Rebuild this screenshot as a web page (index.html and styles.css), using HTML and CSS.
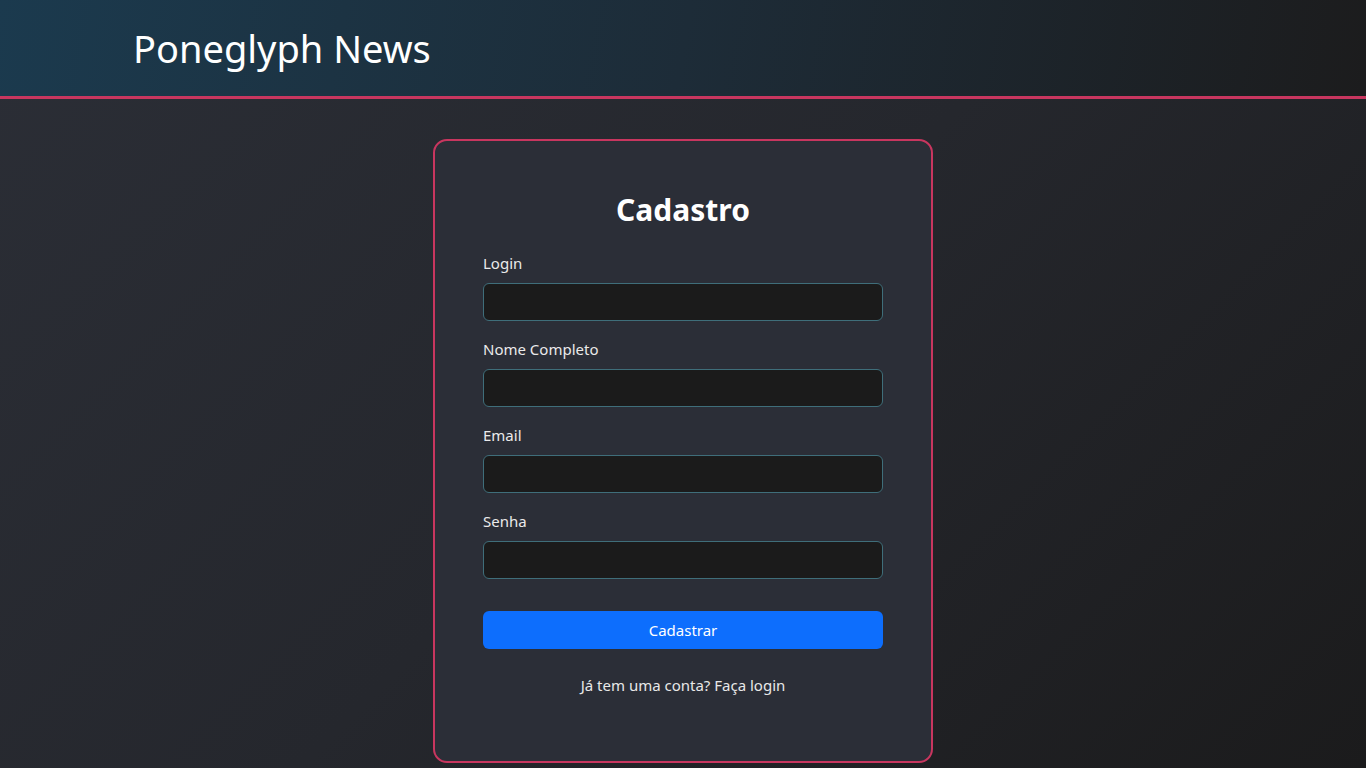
FILE: index.html
```html
<!DOCTYPE html>
<html lang="pt-BR">
<head>
<meta charset="utf-8">
<title>Poneglyph News - Cadastro</title>
<link rel="stylesheet" href="styles.css">
</head>
<body>
<header class="site-header">
  <div class="header-inner">
    <a class="brand" href="#">Poneglyph News</a>
  </div>
</header>
<main class="page">
  <form class="card">
    <h2 class="card-title">Cadastro</h2>
    <div class="field">
      <label class="field-label" for="login">Login</label>
      <input class="field-input" id="login" type="text">
    </div>
    <div class="field">
      <label class="field-label" for="nome">Nome Completo</label>
      <input class="field-input" id="nome" type="text">
    </div>
    <div class="field">
      <label class="field-label" for="email">Email</label>
      <input class="field-input" id="email" type="email">
    </div>
    <div class="field">
      <label class="field-label" for="senha">Senha</label>
      <input class="field-input" id="senha" type="password">
    </div>
    <button class="submit" type="button">Cadastrar</button>
    <p class="alt-link"><a href="#">Já tem uma conta? Faça login</a></p>
  </form>
</main>
</body>
</html>
```
FILE: styles.css
```css
* { box-sizing: border-box; }
html, body { margin: 0; padding: 0; }
body {
  font-family: "Noto Sans", "Open Sans", sans-serif;
  color: #e6e6e6;
  background: linear-gradient(135deg, #2b2e36 0%, #25272d 50%, #1b1b1c 100%);
  background-attachment: fixed;
  min-height: 100vh;
}
.site-header {
  background: linear-gradient(100deg, #1b3a4e 0%, #1d2c38 50%, #1c1c1d 100%);
  border-bottom: 3px solid #c8365f;
  height: 99px;
}
.header-inner {
  height: 96px;
  display: flex;
  align-items: center;
  padding-left: 133px;
}
.brand {
  font-size: 38px;
  font-weight: 400;
  color: #ffffff;
  text-decoration: none;
}
.page {
  display: flex;
  justify-content: center;
  padding: 40px 0 53px;
}
.card {
  width: 500px;
  background: #2b2e37;
  border: 2px solid #c8365f;
  border-radius: 14px;
  padding: 48px;
  display: flex;
  flex-direction: column;
}
.card-title {
  margin: 2px 0 22px;
  text-align: center;
  font-size: 30px;
  line-height: 38px;
  font-weight: 700;
  color: #ffffff;
}
.field {
  display: flex;
  flex-direction: column;
  margin-bottom: 16px;
}
.field-label {
  font-size: 15px;
  line-height: 24px;
  margin-bottom: 8px;
  color: #eaeaea;
}
.field-input {
  height: 38px;
  background: #1b1b1b;
  border: 1px solid #3f6e7a;
  border-radius: 6px;
  color: #fff;
  font: inherit;
  padding: 6px 12px;
  outline: none;
}
.submit {
  margin-top: 16px;
  height: 38px;
  border: none;
  border-radius: 6px;
  background: #0d6efd;
  color: #ffffff;
  font-family: inherit;
  font-size: 15px;
  cursor: pointer;
}
.alt-link {
  margin: 24px 0 16px;
  text-align: center;
  font-size: 15px;
  line-height: 24px;
}
.alt-link a {
  color: #e8e8e8;
  text-decoration: none;
}
```
